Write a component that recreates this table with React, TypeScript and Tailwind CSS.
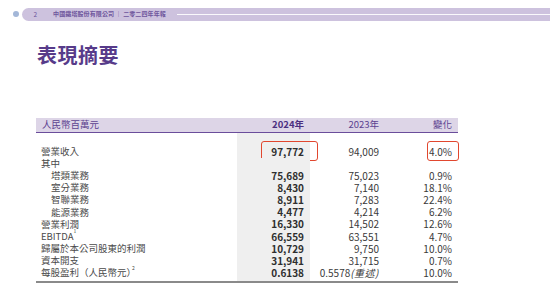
import React from 'react';

type Row = {
  label: React.ReactNode;
  y2024?: string;
  y2023?: React.ReactNode;
  change?: string;
  indent?: boolean;
  mark?: boolean;
};

const rows: Row[] = [
  { label: '營業收入', y2024: '97,772', y2023: '94,009', change: '4.0%', mark: true },
  { label: '其中' },
  { label: '塔類業務', y2024: '75,689', y2023: '75,023', change: '0.9%', indent: true },
  { label: '室分業務', y2024: '8,430', y2023: '7,140', change: '18.1%', indent: true },
  { label: '智聯業務', y2024: '8,911', y2023: '7,283', change: '22.4%', indent: true },
  { label: '能源業務', y2024: '4,477', y2023: '4,214', change: '6.2%', indent: true },
  { label: '營業利潤', y2024: '16,330', y2023: '14,502', change: '12.6%' },
  {
    label: (
      <>
        EBITDA<sup className="text-[5px] align-super">1</sup>
      </>
    ),
    y2024: '66,559',
    y2023: '63,551',
    change: '4.7%',
  },
  { label: '歸屬於本公司股東的利潤', y2024: '10,729', y2023: '9,750', change: '10.0%' },
  { label: '資本開支', y2024: '31,941', y2023: '31,715', change: '0.7%' },
  {
    label: (
      <>
        每股盈利（人民幣元<span className="-mr-[4px]">）</span>
        <sup className="text-[5px] align-super">2</sup>
      </>
    ),
    y2024: '0.6138',
    y2023: (
      <>
        0.5578<span className="italic tracking-[0.5px]">(重述)</span>
      </>
    ),
    change: '10.0%',
  },
];

const cols = 'grid grid-cols-[201px_73px_75px_73px]';

export default function App() {
  return (
    <div className="w-[550px] h-[296px] bg-white overflow-hidden font-['Noto_Sans_CJK_TC','Noto_Sans',sans-serif]">
      {/* top strip */}
      <div className="flex items-center pt-2 pl-[12.5px]">
        <div className="w-[6px] h-[6px] rounded-full bg-[#a3b7d8] shrink-0" />
        <div className="ml-[3px] flex-1 h-[12.5px] rounded-l-full bg-[#cdc2de] flex items-center text-[#6e559c]">
          <span className="ml-[12px] text-[6.5px] leading-none">2</span>
          <span className="ml-[16px] text-[6px] leading-none font-bold tracking-[0.1px] whitespace-nowrap">
            中國鐵塔股份有限公司 ｜ 二零二四年年報
          </span>
          <div className="ml-[11px] flex-1 h-px bg-white/90" />
        </div>
      </div>

      {/* title */}
      <h1 className="ml-[37px] mt-[24px] text-[20px] leading-[20px] font-bold text-[#573b8a] tracking-[0.5px]">
        表現摘要
      </h1>

      {/* table */}
      <div className="ml-[36px] mt-[53px] w-[422px] border-b-2 border-[#8a8a8a] text-[#3a3a3a]">
        <div className={`${cols} h-[15px] items-center bg-[#ddd5e7] border-b-[1.5px] border-[#6a4d9b] text-[9.5px] leading-none text-[#5c4290]`}>
          <span className="pl-[6px]">人民幣百萬元</span>
          <span className="text-right pr-[6px] font-bold text-[#4b2f80]">2024年</span>
          <span className="text-right pr-[6px]">2023年</span>
          <span className="text-right pr-[6px]">變化</span>
        </div>
        <div className={`${cols} h-[13px]`}>
          <span />
          <span className="bg-[#efefef]" />
          <span />
          <span />
        </div>
        {rows.map((r, i) => (
          <div key={i} className={`${cols} h-[12.15px] items-center leading-none`}>
            <span className={`text-[9.5px] text-[#4a4a4a] whitespace-nowrap ${r.indent ? 'pl-[15px]' : 'pl-[5px]'}`}>
              {r.label}
            </span>
            <span className="relative h-full flex items-center justify-end pr-[6px] bg-[#efefef] text-[10px] font-bold text-[#2e2e2e]">
              {r.y2024}
              {r.mark && (
                <span className="absolute left-[24px] right-[-8px] top-[-5px] bottom-[-3px] border-[1.5px] border-[#e1472f] rounded-[3px]" />
              )}
            </span>
            <span className="text-right pr-[6px] text-[10px] whitespace-nowrap">{r.y2023}</span>
            <span className="relative h-full flex items-center justify-end pr-[6px] text-[10px]">
              {r.change}
              {r.mark && (
                <span className="absolute left-[42px] right-[-1px] top-[-5px] bottom-[-3px] border-[1.5px] border-[#e1472f] rounded-[3px]" />
              )}
            </span>
          </div>
        ))}
        <div className={`${cols} h-[1.5px]`}>
          <span />
          <span className="bg-[#efefef]" />
          <span />
          <span />
        </div>
      </div>
    </div>
  );
}
